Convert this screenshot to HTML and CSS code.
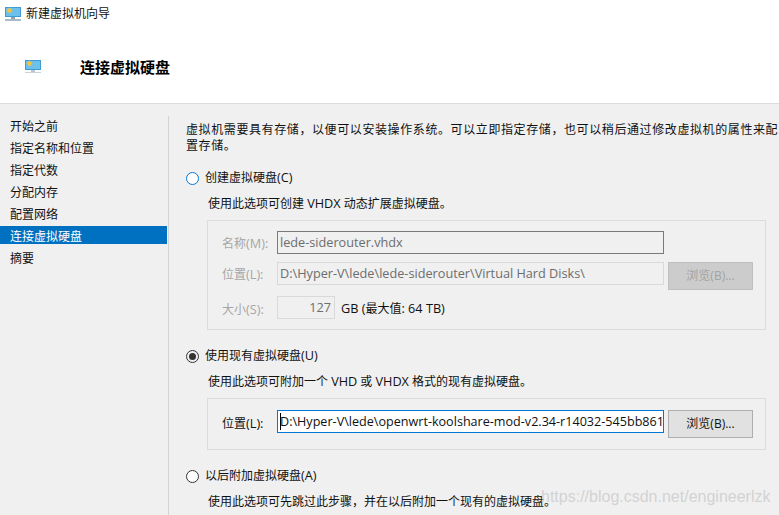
FILE: index.html
```html
<!DOCTYPE html>
<html lang="zh-CN">
<head>
<meta charset="utf-8">
<title>新建虚拟机向导</title>
<link rel="stylesheet" href="styles.css">
</head>
<body>
<div class="window">
  <header class="head">
    <div class="titlebar">
      <svg class="icon" viewBox="0 0 16 16" width="16" height="16"><rect x="0" y="1" width="16" height="10" fill="#3f9bd6"/><rect x="1" y="2" width="14" height="8" fill="#6cc0ea"/><circle cx="4.500" cy="4.500" r="2.200" fill="#f6c33b"/><path d="M4.500 1.500v6M1.500 4.500h6M2.500 2.500l4 4M6.500 2.500l-4 4" stroke="#f6c33b" stroke-width=".7"/><rect x="6" y="11" width="4" height="2" fill="#8fa3b0"/><rect x="0" y="13" width="16" height="2" fill="#a9bac6"/></svg>
      <span>新建虚拟机向导</span>
    </div>
    <div class="banner">
      <svg class="icon" viewBox="0 0 16 16" width="16" height="16"><rect x="0" y="1" width="16" height="10" fill="#3f9bd6"/><rect x="1" y="2" width="14" height="8" fill="#6cc0ea"/><circle cx="4.500" cy="4.500" r="2.200" fill="#f6c33b"/><path d="M4.500 1.500v6M1.500 4.500h6M2.500 2.500l4 4M6.500 2.500l-4 4" stroke="#f6c33b" stroke-width=".7"/><rect x="6" y="11" width="4" height="2" fill="#b9c6cf"/><rect x="0" y="13" width="16" height="1" fill="#c8d2d9"/></svg>
      <h1>连接虚拟硬盘</h1>
    </div>
  </header>
  <div class="body">
    <nav class="nav">
      <div class="step">开始之前</div>
      <div class="step">指定名称和位置</div>
      <div class="step">指定代数</div>
      <div class="step">分配内存</div>
      <div class="step">配置网络</div>
      <div class="step current">连接虚拟硬盘</div>
      <div class="step">摘要</div>
    </nav>
    <main class="main">
      <p class="intro">虚拟机需要具有存储，以便可以安装操作系统。可以立即指定存储，也可以稍后通过修改虚拟机的属性来配置存储。</p>

      <div class="option first"><span class="radio"></span><span>创建虚拟硬盘<span class="lat">(C)</span></span></div>
      <p class="desc">使用此选项可创建 <span class="lat">VHDX</span> 动态扩展虚拟硬盘。</p>
      <div class="group big">
        <label class="off">名称<span class="lat">(M):</span></label>
        <div class="box dark off-text">lede-siderouter.vhdx</div>
        <span></span>
        <label class="off">位置<span class="lat">(L):</span></label>
        <div class="box light off-text">D:\Hyper-V\lede\lede-siderouter\Virtual Hard Disks\</div>
        <div class="btn disabled">浏览(B)...</div>
        <label class="off size-label">大小<span class="lat">(S):</span></label>
        <div class="size-row"><div class="box light off-text size">127</div><span class="size-note"><span class="lat">GB (</span>最大值<span class="lat">: 64 TB)</span></span></div>
      </div>

      <div class="option second"><span class="radio checked"></span><span>使用现有虚拟硬盘<span class="lat">(U)</span></span></div>
      <p class="desc">使用此选项可附加一个 <span class="lat">VHD</span> 或 <span class="lat">VHDX</span> 格式的现有虚拟硬盘。</p>
      <div class="group small">
        <label>位置<span class="lat">(L):</span></label>
        <div class="box focus">D:\Hyper-V\lede\openwrt-koolshare-mod-v2.34-r14032-545bb861e6</div>
        <div class="btn">浏览(B)...</div>
      </div>

      <div class="option third"><span class="radio"></span><span>以后附加虚拟硬盘<span class="lat">(A)</span></span></div>
      <p class="desc">使用此选项可先跳过此步骤，并在以后附加一个现有的虚拟硬盘。</p>
    </main>
  </div>
  <div class="watermark">https://blog.csdn.net/engineerlzk</div>
</div>
</body>
</html>
```
FILE: styles.css
```css
* { box-sizing: border-box; }
html, body { margin: 0; padding: 0; height: 100%; overflow: hidden; }
body { background: #f0f0f0; color: #111; font: 12px/16px "Open Sans", "Noto Sans CJK SC", sans-serif; }
.window { position: relative; width: 779px; height: 515px; overflow: hidden; }
.lat { font-size: 12.7px; line-height: 1; }
.head { height: 104px; background: #fff; border-bottom: 1px solid #dcdcdc; }
.titlebar { display: flex; align-items: center; gap: 5px; height: 28px; padding-left: 5px; }
.banner { display: flex; align-items: center; height: 20px; margin-top: 29px; padding-left: 25px; }
.banner h1 { margin: 0 0 0 39px; font-size: 15px; line-height: 20px; font-weight: 700; color: #000; }
.icon { flex: none; }
.body { display: flex; height: 411px; }
.nav { width: 169px; flex: none; margin-top: 12px; padding-right: 1px; border-right: 1px solid #d4d4d4; }
.step { height: 18px; line-height: 21px; margin-bottom: 4px; padding-left: 10px; }
.step.current { background: #0070c0; color: #fff; }
.main { flex: 1; padding: 18px 0 0 17px; }
.intro { margin: 0; width: 593px; letter-spacing: .6px; }
.option { display: flex; align-items: center; gap: 6px; height: 16px; }
.option.first { margin-top: 16px; }
.option.second { margin-top: 18px; }
.option.third { margin-top: 18px; }
.radio { flex: none; width: 13px; height: 13px; border: 1px solid #0078d7; border-radius: 50%; background: #fff; position: relative; }
.radio.checked { border-color: #333; background: #f0f0f0; }
.radio.checked::after { content: ""; position: absolute; left: 2px; top: 2px; width: 7px; height: 7px; border-radius: 50%; background: #333; }
.third .radio { border-color: #333; }
.desc { margin: 10px 0 8px 22px; }
.group { display: grid; margin-left: 21px; width: 559px; border: 1px solid #dcdcdc; padding-left: 14px; padding-right: 12px; grid-template-columns: 55px 387px 89px; }
.group.big { height: 110px; padding-top: 10px; grid-template-rows: 23px 28px 23px; row-gap: 8px; }
.group.big .size-label { margin-top: -1px; }
.group.big .size-row { margin-top: -2px; }
.size-note { padding-top: 2px; }
.group.small { height: 52px; padding-top: 11px; grid-template-rows: 28px; }
.group label { line-height: 25px; }
.group.small label { line-height: 28px; }
.group .btn { margin-left: 4px; width: 85px; }
.off { color: #a6a6a6; }
.off-text { color: #6d6d6d; font-size: 12.7px; }
.box { height: 23px; line-height: 21px; padding: 0 2px; white-space: nowrap; overflow: hidden; }
.box.dark { border: 1px solid #7a7a7a; }
.box.light { border: 1px solid #d9d9d9; }
.box.focus { position: relative; border: 1px solid #0078d7; background: #fff; color: #111; font-size: 12.6px; }
.box.focus::before { content: ""; position: absolute; left: 2px; top: 2px; width: 1px; height: 17px; background: #000; }
.size-row { grid-column: 2 / 4; display: flex; align-items: center; gap: 6px; height: 23px; color: #111; }
.size { width: 58px; text-align: right; padding-right: 3px; }
.btn { height: 28px; line-height: 26px; text-align: center; border: 1px solid #adadad; background: #e1e1e1; color: #111; }
.btn.disabled { background: #ccc; border-color: #bfbfbf; color: #a3a3a3; }
.watermark { position: absolute; left: 541px; top: 487px; font: 16px/20px "Liberation Sans", sans-serif; color: rgba(200, 200, 200, .75); white-space: nowrap; }
```
